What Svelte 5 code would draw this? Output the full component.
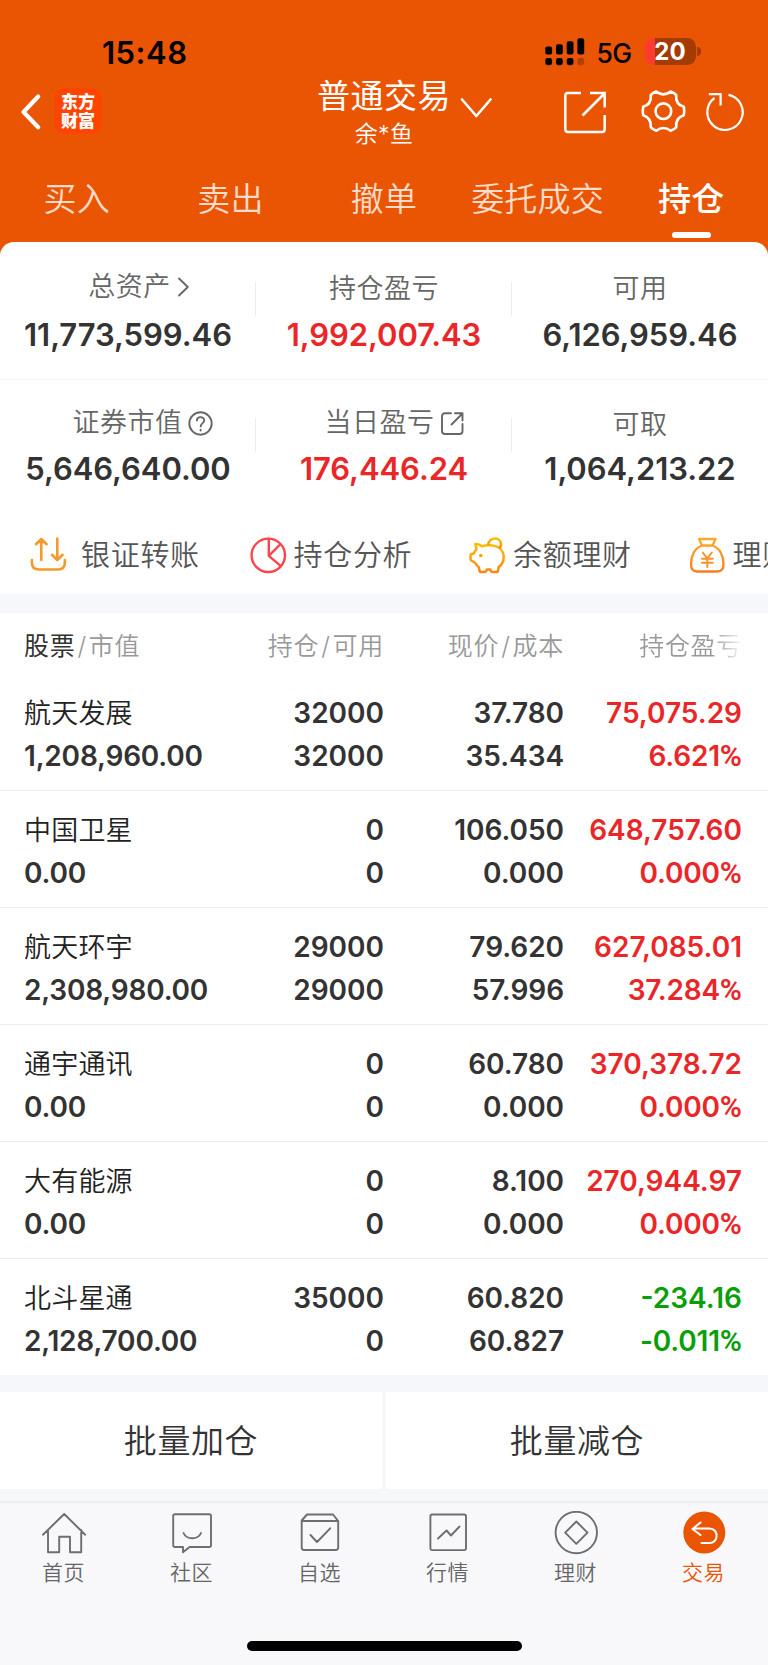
<script>
  const tabs = ['买入', '卖出', '撤单', '委托成交', '持仓'];
  const summary = [
    [
      { label: '总资产', value: '11,773,599.46', icon: 'chevron' },
      { label: '持仓盈亏', value: '1,992,007.43', up: true },
      { label: '可用', value: '6,126,959.46' }
    ],
    [
      { label: '证券市值', value: '5,646,640.00', icon: 'help' },
      { label: '当日盈亏', value: '176,446.24', up: true, icon: 'open' },
      { label: '可取', value: '1,064,213.22' }
    ]
  ];
  const holdings = [
    { name: '航天发展', cap: '1,208,960.00', qty: '32000', avail: '32000', price: '37.780', cost: '35.434', pl: '75,075.29', rate: '6.621' },
    { name: '中国卫星', cap: '0.00', qty: '0', avail: '0', price: '106.050', cost: '0.000', pl: '648,757.60', rate: '0.000' },
    { name: '航天环宇', cap: '2,308,980.00', qty: '29000', avail: '29000', price: '79.620', cost: '57.996', pl: '627,085.01', rate: '37.284' },
    { name: '通宇通讯', cap: '0.00', qty: '0', avail: '0', price: '60.780', cost: '0.000', pl: '370,378.72', rate: '0.000' },
    { name: '大有能源', cap: '0.00', qty: '0', avail: '0', price: '8.100', cost: '0.000', pl: '270,944.97', rate: '0.000' },
    { name: '北斗星通', cap: '2,128,700.00', qty: '35000', avail: '0', price: '60.820', cost: '60.827', pl: '-234.16', rate: '-0.011', down: true }
  ];
  const nav = ['首页', '社区', '自选', '行情', '理财', '交易'];
</script>

<div class="screen">
  <header>
    <div class="status">
      <span class="time">15:48</span>
      <svg class="signal" width="40" height="28" viewBox="0 0 40 28">
        <rect x="0.3" y="8.5" width="6.8" height="8" rx="2" />
        <rect x="11" y="6.3" width="6.8" height="10.2" rx="2" />
        <rect x="21.7" y="3.3" width="6.8" height="13.2" rx="2" />
        <rect x="32.4" y="0.3" width="6.8" height="16.2" rx="2" />
        <rect x="0.3" y="20" width="6.8" height="7.2" rx="2.4" />
        <rect x="11" y="20" width="6.8" height="7.2" rx="2.4" />
        <rect x="21.7" y="20" width="6.8" height="7.2" rx="2.4" />
        <rect x="32.4" y="20" width="6.8" height="7.2" rx="2.4" opacity="0.25" />
      </svg>
      <span class="net">5G</span>
      <span class="battery"><b>20</b></span>
      <i class="nub"></i>
    </div>

    <div class="titlebar">
      <svg class="back" width="24" height="38" viewBox="0 0 24 38"><path d="M18.2 3.5 3.5 19l14.7 15.2" fill="none" stroke="#fff" stroke-width="4.2" stroke-linecap="round" stroke-linejoin="round" /></svg>
      <div class="logo">东方财富</div>
      <div class="title">
        <div class="name">普通交易</div>
        <div class="user">余*鱼</div>
      </div>
      <svg class="down" width="32" height="22" viewBox="0 0 32 22"><path d="M2 2.5 16.3 19 30.5 2.5" fill="none" stroke="#fff" stroke-width="2.6" stroke-linecap="round" stroke-linejoin="round" /></svg>
      <svg class="tools" width="184" height="46" viewBox="561 88 184 46" fill="none" stroke="#fff" stroke-width="2.5">
        <path d="M581 93H568q-2.7 0-2.7 2.7v33.6q0 2.7 2.7 2.7h34.2q2.500 0 2.500-2.700V115M590 93h14.700v14.500M582.500 115.500 604 94" />
        <path d="M656.200 91.600 Q663.500 97 670.600 91.600 Q674 92.600 676.200 95 Q675.300 104.500 683.800 106.800 Q684.700 111.200 683.800 115.300 Q675.300 118 676.200 127.300 Q674 129.500 670.600 130.700 Q663.500 125.300 656.200 130.700 Q653 129.500 650.800 127.300 Q651.500 118 643.200 115.300 Q642.300 111.200 643.200 106.800 Q651.500 104.500 650.800 95 Q653 92.600 656.200 91.600 Z" stroke-width="2.600" stroke-linejoin="round" />
        <circle cx="663.400" cy="111.200" r="7.800" stroke-width="2.600" />
        <path d="M728.500 94.900 A17.700 17.700 0 1 1 714.500 98 M708.800 94.200H720.600V105.500" stroke-width="2.200" />
      </svg>
    </div>

    <nav class="tabs">
      {#each tabs as tab, i}
        <div class="tab" class:active={i === 4}>{tab}</div>
      {/each}
    </nav>
  </header>

  <section class="summary">
    {#each summary as row}
      <div class="sumrow">
        {#each row as cell}
          <div class="cell">
            <div class="label {cell.icon ?? ''}" class:lifted={cell.icon}>
              <span>{cell.label}</span>
              {#if cell.icon === 'chevron'}
                <svg width="13" height="20" viewBox="0 0 13 20"><path d="M2 1.500 10.800 10 2 18.500" /></svg>
              {:else if cell.icon === 'help'}
                <svg width="25" height="25" viewBox="0 0 25 25"><circle cx="12.500" cy="12.500" r="11.200" /><path d="M8.900 9.600c0-4.600 7.300-4.600 7.300-.2 0 2.700-3.500 2.800-3.500 6" /><path d="M12.600 18.700v.8" /></svg>
              {:else if cell.icon === 'open'}
                <svg width="25" height="25" viewBox="0 0 25 25"><path d="M11 2.300H5Q2 2.300 2 5.300v14.700q0 3 3 3h14.500q3 0 3-3V13M15 2.300h7.500v7.200M11.500 13.500 22 3" /></svg>
              {/if}
            </div>
            <div class="value" class:red={cell.up}>{cell.value}</div>
          </div>
        {/each}
      </div>
    {/each}
  </section>

  <section class="actions">
    <div class="action first">
      <svg width="37" height="37" viewBox="0 0 37 37" fill="none" stroke="#f39a2b" stroke-width="2.600" stroke-linecap="round" stroke-linejoin="round"><path d="M1.900 23v2.500q0 7 7 7h19q7 0 7-7V23M11.300 23V2.500M6 7.200l5.300-5.200 5.300 5.200M27.300 1.500v21M22 17.800l5.300 5.200 5.300-5.200" /></svg>
      <span>银证转账</span>
    </div>
    <div class="action">
      <svg width="37" height="37" viewBox="0 0 37 37" fill="none" stroke="#fb444b" stroke-width="2.400" stroke-linejoin="round"><circle cx="18.300" cy="18.300" r="16.700" /><path d="M18.800 1.600v17.200L30.500 7M18.800 18.800l12.500 10.500" /></svg>
      <span>持仓分析</span>
    </div>
    <div class="action">
      <svg width="37" height="37" viewBox="0 0 37 37" fill="none" stroke="url(#gold)" stroke-width="2.500" stroke-linejoin="round"><defs><linearGradient id="gold" x1="0" y1="0" x2="0" y2="1"><stop offset="0" stop-color="#ffbd00" /><stop offset="1" stop-color="#ff8610" /></linearGradient></defs><path d="M6.300 7q4-.2 6.700 2.200 3.500-1 7.500-.9C30 8.600 34.700 13.500 34.700 20.200c0 4.600-2 7.700-5 9.800l-.5 3.200q-.3 1.800-2 1.800h-3.400q-1.500 0-2-1.200l-.5-1.300h-3.400l-.5 1.300q-.5 1.200-2 1.200h-3q-1.700 0-2-1.800l-.5-3q-2.400-1.800-3.600-4.200L2.400 23.500q-.9-.4-.9-1.400v-3.700q0-1.300 1.300-1.500l2-.4q1-2.500 2.700-4.200z" /><path d="M19 8.300c1.300-8.800 12.300-8.600 13-1.500q.1 3.200-2 4.600" /><circle cx="11.800" cy="18.500" r="1.700" fill="#ffa000" stroke="none" /></svg>
      <span>余额理财</span>
    </div>
    <div class="action">
      <svg width="37" height="37" viewBox="0 0 37 37" fill="none" stroke="url(#bag)" stroke-width="2.300" stroke-linejoin="round" stroke-linecap="round"><defs><linearGradient id="bag" x1="0" y1="0" x2="0" y2="1"><stop offset="0" stop-color="#ffa92c" /><stop offset="1" stop-color="#fa7b20" /></linearGradient></defs><path d="M10 2h16.500l-3 6.500H13zM13 8.500C5.500 11 2 19 2 27c0 5 1.500 7.500 6 7.500h20.500c4.500 0 6-2.500 6-7.500 0-8-3.500-16-11-18.500" /><g stroke="#fa932b" stroke-width="2"><path d="m13.800 15.500 4.500 6 4.500-6M18.300 21.500V30M13 21.700h10.800M13 25.800h10.800" /></g></svg>
      <span>理财</span>
    </div>
  </section>

  <section class="table">
    <div class="thead">
      <div class="c1"><b>股票</b><em>/</em>市值</div>
      <div class="c2">持仓<em>/</em>可用</div>
      <div class="c3">现价<em>/</em>成本</div>
      <div class="c4"><span class="fade">持仓盈亏</span></div>
    </div>
    {#each holdings as h}
      <div class="hold">
        <div class="c1"><p class="cn">{h.name}</p><p>{h.cap}</p></div>
        <div class="c2"><p>{h.qty}</p><p>{h.avail}</p></div>
        <div class="c3"><p>{h.price}</p><p>{h.cost}</p></div>
        <div class="c4" class:red={!h.down} class:green={h.down}><p>{h.pl}</p><p class="rate">{h.rate}<i>%</i></p></div>
      </div>
    {/each}
  </section>

  <section class="batch">
    <button>批量加仓</button>
    <button>批量减仓</button>
  </section>

  <footer>
    <div class="bottom">
      {#each nav as item, i}
        <div class="item" class:on={i === 5}>
          <svg width="46" height="46" viewBox="0 0 46 46" fill="none" stroke="#6e6e70" stroke-width="1.900" stroke-linejoin="round" stroke-linecap="round">
            {#if i === 0}
              <path d="M2 23.700 23.200 3l21 20.700M7 19v22.300h11.200V25.800H29v15.500h11.200V19" />
            {:else if i === 1}
              <path d="M6 3.200h34.200q1.800 0 1.800 1.800v29.200q0 1.800-1.800 1.800H20.500l-6.500 5.300V36H6q-1.800 0-1.800-1.800V5q0-1.800 1.800-1.800zM14.500 22c3 7 14.500 7 17.500 0" />
            {:else if i === 2}
              <path d="M4.700 10h36.500v26.500q0 2.500-2.500 2.500H7.200q-2.500 0-2.500-2.500V9.500L10 3.500h26l5.200 6.500M13.500 24l6.500 7 13.200-13.700" />
            {:else if i === 3}
              <path d="M7.200 3.500h32q1.800 0 1.800 1.800v32q0 1.800-1.800 1.800h-32q-1.800 0-1.800-1.800v-32q0-1.800 1.800-1.800zM13 27.500l8.500-8 4.500 5L34.500 15.500" />
            {:else if i === 4}
              <circle cx="23.300" cy="21.500" r="20.700" /><path d="M23.300 10.500 34.500 21.700 23.300 32.800 12.200 21.700z" />
            {:else}
              <circle cx="23.300" cy="21.500" r="21" fill="#ea5504" stroke="none" /><path d="M19.500 11.500 11.500 18l8 6M12 17.500h16.500c9.500 0 9.500 14.500 0 14.500H20.500" stroke="#fff" stroke-width="2" />
            {/if}
          </svg>
          <span>{item}</span>
        </div>
      {/each}
    </div>
    <div class="home"></div>
  </footer>
</div>

<style>
  :global(body) { background: #fff; }
  .screen { width: 768px; height: 1665px; overflow: hidden; display: flex; flex-direction: column; background: #ea5504; font-family: Inter, "Noto Sans CJK SC", sans-serif; color: #333; }
  .screen * { box-sizing: border-box; }
  p { margin: 0; }
  svg { display: block; flex: none; }

  header { height: 242px; flex: none; color: #fff; }
  .status { height: 76px; display: flex; align-items: flex-start; padding: 38px 0 0 102px; color: #000; }
  .time { width: 442.500px; font-weight: 600; font-size: 31px; line-height: 30px; letter-spacing: 0.500px; }
  .signal { margin-right: 12px; }
  .net { width: 48px; font-size: 26.500px; line-height: 31px; font-weight: 500; letter-spacing: -0.600px; }
  .battery { width: 51px; height: 27px; border-radius: 8.500px; background: linear-gradient(90deg, #ff3b30 10px, #a33b03 10px); color: #fff; text-align: center; font-size: 24px; line-height: 27px; }
  .battery b { font-weight: 700; }
  .nub { width: 3.500px; height: 9px; margin: 9px 0 0 1.500px; background: #a33b03; border-radius: 0 4px 4px 0; }

  .titlebar { height: 80px; display: flex; align-items: flex-start; padding-left: 20px; }
  .back { margin-top: 16.500px; }
  .logo { width: 46px; height: 46px; margin: 12px 0 0 11px; padding: 3px 5px 0 6px; border-radius: 9px; background: #ff4402; font: 900 17px/19px "Noto Sans CJK SC", sans-serif; }
  .title { width: 142px; margin-left: 212px; padding-top: 2px; display: flex; flex-direction: column; align-items: center; }
  .name { font-size: 33px; line-height: 36px; letter-spacing: 0.500px; white-space: nowrap; }
  .user { font-size: 23px; line-height: 30px; letter-spacing: 0.300px; margin-top: 5px; font-weight: 350; }
  .down { margin: 21px 0 0 5px; }
  .tools { margin: 12px 0 0 69px; }

  .tabs { display: flex; height: 86px; }
  .tab { flex: 1; display: flex; flex-direction: column; align-items: center; font-size: 33px; line-height: 87px; letter-spacing: 0.200px; font-weight: 350; color: #ffdcc9; white-space: nowrap; }
  .tab.active { color: #fff; font-weight: 500; }
  .tab.active::after { content: ''; width: 39px; height: 6px; margin-top: -11px; border-radius: 3px; background: #fff; }

  .summary { height: 272px; flex: none; background: #fff; border-radius: 14px 14px 0 0; }
  .sumrow { display: flex; height: 138px; border-bottom: 1px solid #f3f3f4; }
  .sumrow:last-child { border: 0; height: 134px; }
  .cell { flex: 1; display: flex; flex-direction: column; align-items: center; padding-top: 29px; background: linear-gradient(#ececee, #ececee) 100% 40px / 1px 34px no-repeat; }
  .sumrow:last-child .cell { padding-top: 27px; background-position: 100% 38px; }
  .cell:last-child { background: none; }
  .label { height: 36px; display: flex; align-items: center; font-size: 27px; line-height: 36px; font-weight: 350; color: #666; letter-spacing: 0.500px; }
  .label.lifted { position: relative; top: -2px; }
  .label svg { fill: none; stroke: #666; stroke-width: 1.900; stroke-linejoin: round; stroke-linecap: round; }
  .label.chevron { gap: 6px; padding-left: 22px; }
  .label.help { gap: 5px; padding-left: 29px; }
  .label.open { gap: 5px; padding-left: 21px; }
  .value { margin-top: 9px; font-size: 31px; line-height: 38px; font-weight: 600; color: #333; letter-spacing: -0.050px; }
  .sumrow:last-child .value { margin-top: 7px; }
  .red, .value.red { color: #ea2628; }
  .green { color: #0a9f0a; }

  .actions { height: 80px; flex: none; background: #fff; display: flex; padding-left: 30px; overflow: hidden; }
  .action { width: 219.500px; flex: none; display: flex; align-items: flex-start; padding-top: 23px; }
  .action span { margin: 0 0 0 7px; font-size: 29px; line-height: 38px; font-weight: 350; letter-spacing: 0.700px; color: #555; white-space: nowrap; }
  .action.first span { margin-left: 14px; }

  .table { border-top: 19px solid #f6f7fa; background: #fff; height: 781px; flex: none; }
  .thead, .hold { display: grid; grid-template-columns: 245px 139px 180px 178px; text-align: right; }
  .thead { height: 61px; padding-top: 15px; font-size: 25px; line-height: 36px; font-weight: 350; letter-spacing: 0.700px; color: #999; }
  .thead b { color: #333; font-weight: 400; }
  .thead em { font-style: normal; margin: 0 2px 0 2px; }
  .fade { background: linear-gradient(90deg, #999 72%, #fff 102%); background-clip: text; color: transparent; }
  .c1 { text-align: left; padding-left: 24px; }
  .hold { height: 117.100px; padding-top: 17.500px; border-bottom: 1px solid #ededef; font-size: 28px; line-height: 43px; font-weight: 600; }
  .hold .c1 { letter-spacing: -0.200px; }
  .hold .c3 { letter-spacing: -0.050px; }
  .hold:last-child { border: 0; }
  p { height: 43px; white-space: nowrap; }
  p.rate { letter-spacing: -0.200px; }
  p i { font-family: Roboto, sans-serif; font-style: normal; font-size: 30px; line-height: 1; letter-spacing: 0; }
  .hold .cn { font-size: 27px; font-weight: 350; letter-spacing: 0.200px; color: #222; }

  .batch { height: 126px; flex: none; display: flex; gap: 4px; padding: 17px 0 12px; background: #f6f7fa; }
  .batch button { flex: 1; border: 0; background: #fff; color: #333; font: 350 33px/40px Inter, "Noto Sans CJK SC", sans-serif; letter-spacing: 0.600px; padding-top: 2px; }

  footer { flex: 1; background: #f8f8fb; border-top: 2px solid #ebedef; display: flex; flex-direction: column; align-items: center; }
  .bottom { width: 768px; display: flex; padding-top: 8px; height: 138px; }
  .item { flex: 1; display: flex; flex-direction: column; align-items: center; font-size: 21px; line-height: 30px; font-weight: 350; letter-spacing: 0.600px; color: #666; }
  .item svg { margin-right: 1px; }
  .item span { margin-top: 1px; margin-right: 1px; }
  .item.on { color: #ea5504; }
  .home { width: 275px; height: 10px; border-radius: 5px; background: #000; }
</style>
